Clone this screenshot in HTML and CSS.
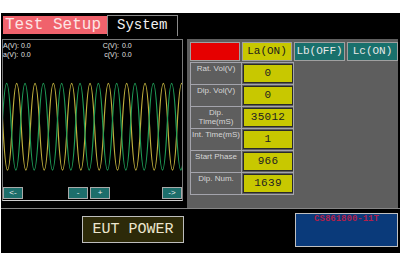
FILE: index.html
```html
<!DOCTYPE html>
<html>
<head>
<meta charset="utf-8">
<link rel="stylesheet" href="styles.css">
</head>
<body>
<div class="screen">
  <div class="tabs">
    <div class="tab tab-active">Test Setup</div>
    <div class="tab tab-sys">System</div>
  </div>
  <div class="main">
    <div class="scope">
      <div class="readouts">
        <span>A(V):</span><span>0.0</span><span class="rl">C(V):</span><span>0.0</span>
        <span>a(V):</span><span>0.0</span><span class="rl">c(V):</span><span>0.0</span>
      </div>
      <svg class="wave" viewBox="3 60 179 126" width="179" height="126">
        <path fill="none" stroke="#c2b23e" stroke-width="1.2" d="M-6.21 126.7 q4.583 -86.7 9.165 0 t9.165 0 t9.165 0 t9.165 0 t9.165 0 t9.165 0 t9.165 0 t9.165 0 t9.165 0 t9.165 0 t9.165 0 t9.165 0 t9.165 0 t9.165 0 t9.165 0 t9.165 0 t9.165 0 t9.165 0 t9.165 0 t9.165 0 t9.165 0 t9.165 0 t9.165 0"/>
        <path fill="none" stroke="#1f9e58" stroke-width="1.2" d="M-16.21 126.7 q4.583 -86.7 9.165 0 t9.165 0 t9.165 0 t9.165 0 t9.165 0 t9.165 0 t9.165 0 t9.165 0 t9.165 0 t9.165 0 t9.165 0 t9.165 0 t9.165 0 t9.165 0 t9.165 0 t9.165 0 t9.165 0 t9.165 0 t9.165 0 t9.165 0 t9.165 0 t9.165 0 t9.165 0 t9.165 0"/>
      </svg>
      <div class="scope-btns">
        <span class="sbtn">&lt;-</span>
        <span class="sgrp"><span class="sbtn">-</span><span class="sbtn">+</span></span>
        <span class="sbtn sbtn-last">-&gt;</span>
      </div>
    </div>
    <div class="params">
      <div class="hdr">
        <div class="h h-red"></div>
        <div class="h h-la">La(ON)</div>
        <div class="h h-lb">Lb(OFF)</div>
        <div class="h h-lc">Lc(ON)</div>
      </div>
      <div class="table">
        <div class="row"><div class="lbl">Rat. Vol(V)</div><div class="valcell"><div class="val">0</div></div></div>
        <div class="row"><div class="lbl">Dip. Vol(V)</div><div class="valcell"><div class="val">0</div></div></div>
        <div class="row"><div class="lbl">Dip.<br>Time(mS)</div><div class="valcell"><div class="val">35012</div></div></div>
        <div class="row"><div class="lbl">Int. Time(mS)</div><div class="valcell"><div class="val">1</div></div></div>
        <div class="row"><div class="lbl">Start Phase</div><div class="valcell"><div class="val">966</div></div></div>
        <div class="row"><div class="lbl">Dip. Num.</div><div class="valcell"><div class="val">1639</div></div></div>
      </div>
    </div>
  </div>
  <div class="bottom">
    <div class="eut">EUT POWER</div>
    <div class="model">CS861800-11T</div>
  </div>
</div>
</body>
</html>
```
FILE: styles.css
```css
* { box-sizing: border-box; margin: 0; padding: 0; }
body {
  background: #fff;
  width: 400px;
  height: 267px;
  overflow: hidden;
  font-family: "Liberation Sans", Arial, sans-serif;
}
.screen {
  margin: 13px 0 0 1px;
  width: 399px;
  height: 240px;
  background: #000;
}
.tabs {
  display: flex;
  align-items: flex-start;
  height: 26px;
  padding: 2px 0 0 2px;
}
.tab { font-family: "Liberation Mono", monospace; white-space: nowrap; }
.tab-active {
  margin-top: 1px;
  width: 104px;
  height: 18px;
  background: #f0626c;
  color: #fde4e4;
  font-size: 16px;
  line-height: 18px;
  padding-left: 2px;
}
.tab-sys {
  width: 71px;
  height: 21px;
  border: 1px solid #8a8a8a;
  border-bottom: none;
  color: #f2f2f2;
  font-size: 14px;
  line-height: 19px;
  padding-left: 9px;
}
.main {
  display: flex;
  height: 170px;
  border-bottom: 1px solid #858585;
}
.scope {
  margin-left: 1px;
  width: 181px;
  height: 162px;
  border: 1px solid #7a7a7a;
  border-bottom-color: #cfcfcf;
  display: flex;
  flex-direction: column;
}
.readouts {
  height: 20px;
  display: grid;
  grid-template-columns: 18px 81px 20px 1fr;
  grid-auto-rows: 9px;
  padding-top: 1px;
  font-size: 7px;
  line-height: 9px;
  color: #e2e2e2;
}
.rl { text-align: right; padding-right: 3px; }
.wave { display: block; width: 179px; height: 126px; }
.scope-btns { display: flex; height: 14px; padding-top: 1px; }
.sbtn {
  display: block;
  width: 20px;
  height: 12px;
  background: #1d6e6b;
  border: 1px solid #a9a9a9;
  color: #f0f0f0;
  font-size: 8px;
  line-height: 10px;
  text-align: center;
}
.sgrp { display: flex; gap: 2px; margin-left: 45px; }
.sbtn-last { margin-left: auto; }
.params {
  margin-left: 4px;
  width: 211px;
  height: 169px;
  background: #5e5e5e;
  padding: 3px 0 0 3px;
}
.hdr { display: flex; gap: 2px; height: 19px; }
.h {
  height: 19px;
  border: 1px solid #a0a0a0;
  font-family: "Liberation Mono", monospace;
  font-size: 11px;
  line-height: 17px;
  text-align: center;
  white-space: nowrap;
}
.h-red { width: 50px; background: #e60000; }
.h-la { width: 50px; background: #c8c800; color: #1a1a1a; }
.h-lb, .h-lc { width: 51px; background: #19706c; color: #e8e8e8; }
.table {
  margin-top: 1px;
  width: 104px;
  border-bottom: 1px solid #a4a4ac;
}
.row { display: flex; height: 22px; border-top: 1px solid #a4a4ac; }
.lbl {
  width: 52px;
  border-left: 1px solid #a4a4ac;
  border-right: 1px solid #a4a4ac;
  font-size: 8px;
  line-height: 9px;
  text-align: center;
  color: #d6d6d6;
  padding-top: 1px;
  white-space: nowrap;
}
.valcell { width: 52px; border-right: 1px solid #a4a4ac; padding: 1px 0 0 1px; }
.val {
  width: 50px;
  height: 19px;
  background: #c8c800;
  border: 1px solid #2a2a2a;
  font-family: "Liberation Mono", monospace;
  font-size: 11px;
  line-height: 17px;
  text-align: center;
  color: #222;
  letter-spacing: 0.3px;
}
.bottom { display: flex; align-items: flex-start; height: 44px; }
.eut {
  margin: 7px 0 0 81px;
  width: 102px;
  height: 27px;
  border: 1px solid #bdbdbd;
  background: #2d2a09;
  color: #ece6cf;
  font-family: "Liberation Mono", monospace;
  font-size: 15px;
  line-height: 25px;
  text-align: center;
}
.model {
  margin: 4px 2px 0 auto;
  width: 103px;
  height: 34px;
  background: #0a3a7a;
  border: 1px solid #c0c0c0;
  color: #b0204c;
  font-family: "Liberation Mono", monospace;
  font-weight: bold;
  font-size: 9px;
  line-height: 11px;
  text-align: center;
}
```
